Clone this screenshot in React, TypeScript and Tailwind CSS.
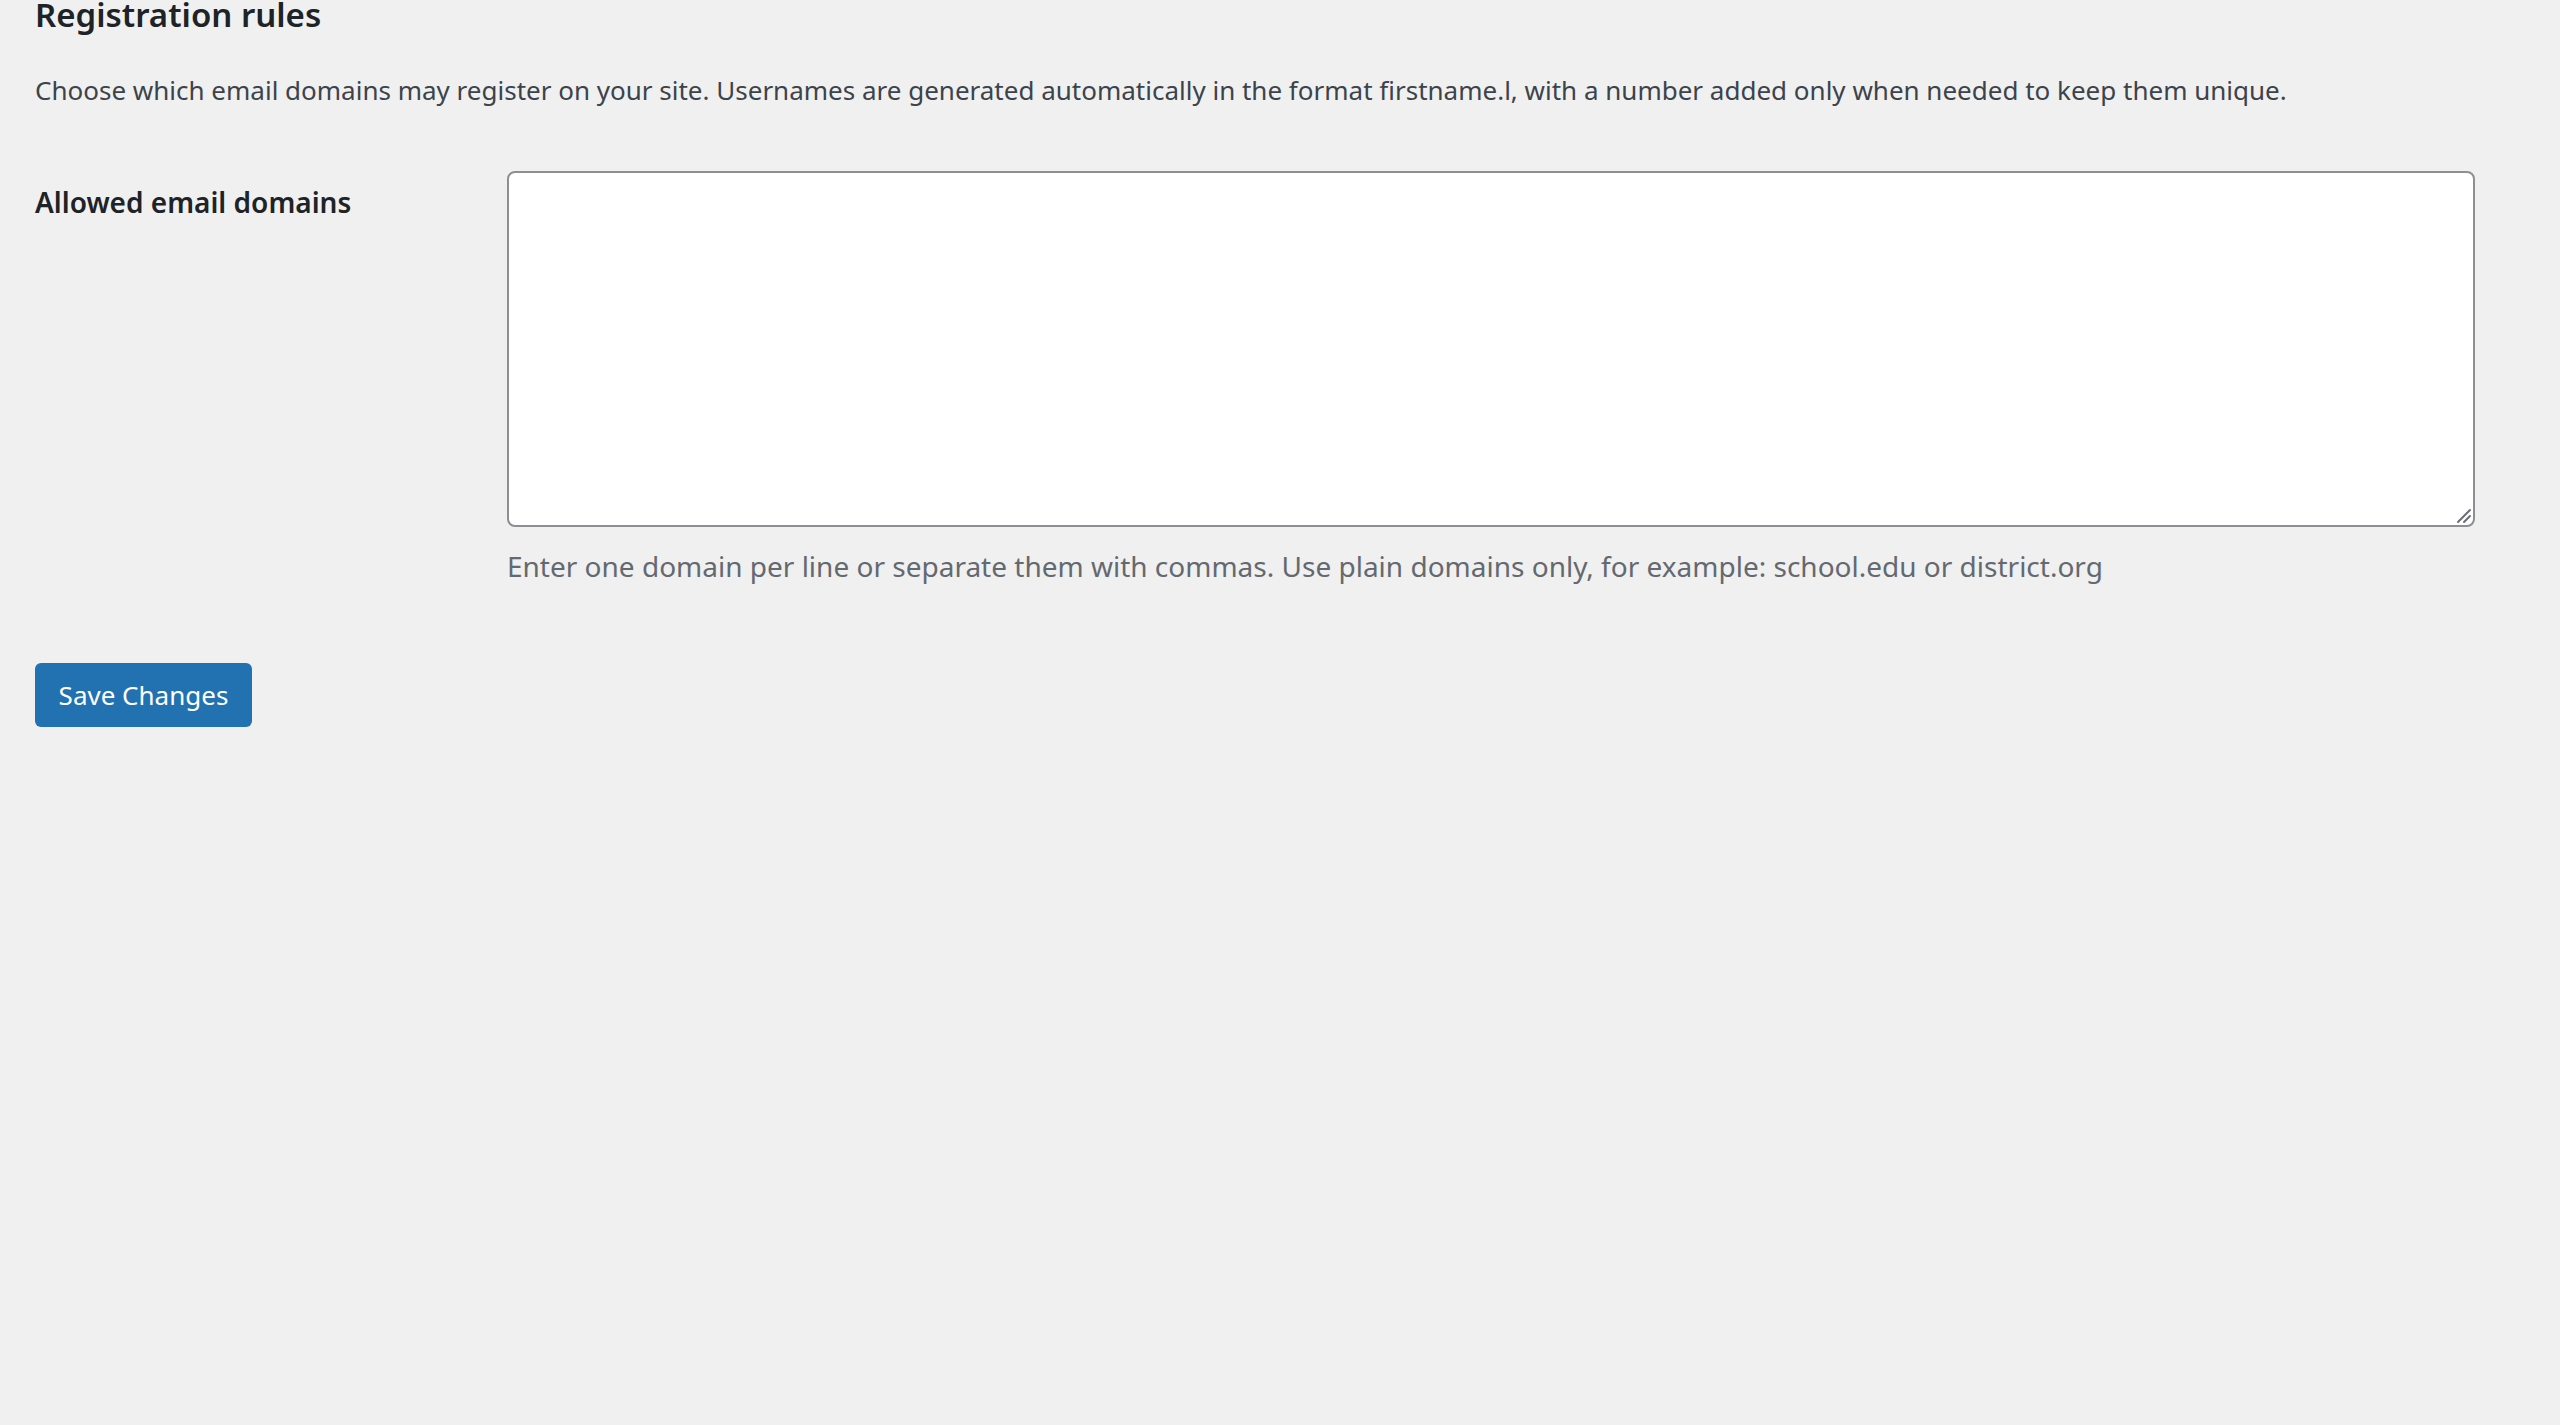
import React from 'react';

const FONT = '"Noto Sans", "Open Sans", sans-serif';

export default function App() {
  return (
    <div className="min-h-screen bg-[#f0f0f1] text-[#3c434a]" style={{ fontFamily: FONT }}>
      <div className="pl-[35px]">
        <h2 className="text-[33px] leading-[30px] font-semibold text-[#1d2327]">Registration rules</h2>
        <p className="mt-[41px] text-[26px] leading-[38px]">
          Choose which email domains may register on your site. Usernames are generated automatically in the format
          firstname.l, with a number added only when needed to keep them unique.
        </p>

        <div className="flex mt-[62px]">
          <div className="w-[472px] shrink-0 pt-[11px]">
            <label htmlFor="domains" className="text-[28px] leading-[40px] font-semibold text-[#1d2327]">
              Allowed email domains
            </label>
          </div>
          <div>
            <div className="relative w-[1968px] h-[356px]">
              <textarea
                id="domains"
                className="block w-full h-full resize-none bg-white border-2 border-[#8c8f94] rounded-[8px] outline-none"
              />
              {/* resize grip */}
              <svg className="absolute right-[3px] bottom-[3px]" width="16" height="16" viewBox="0 0 16 16">
                <path d="M14 2 L2 14 M14 8 L8 14" stroke="#6b6e73" strokeWidth="2" strokeLinecap="round" />
              </svg>
            </div>
            <p className="mt-[20px] text-[28px] leading-[38px] text-[#646970]">
              Enter one domain per line or separate them with commas. Use plain domains only, for example: school.edu or
              district.org
            </p>
          </div>
        </div>

        <button
          type="button"
          className="mt-[78px] w-[217px] h-[64px] flex items-center justify-center rounded-[6px] bg-[#2271b1] text-white text-[26px] leading-[36px]"
        >
          Save Changes
        </button>
      </div>
    </div>
  );
}
